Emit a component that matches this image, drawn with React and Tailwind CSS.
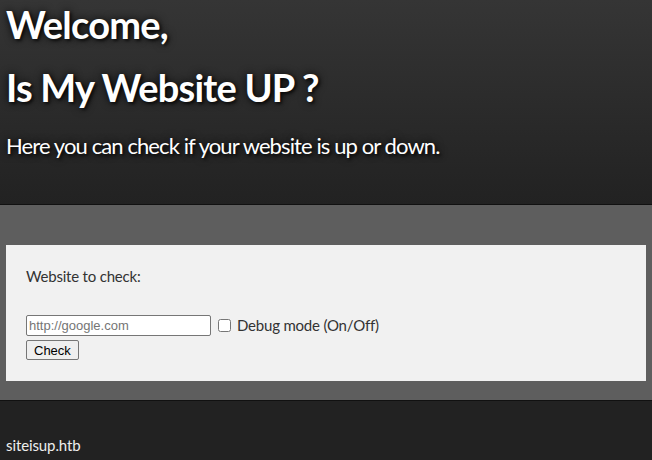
export default function App() {
  return (
    <div className="w-[652px] h-[460px] overflow-hidden bg-[#222222] font-['Lato',sans-serif]">
      <header className="h-[205px] border-b border-[#111111] bg-gradient-to-b from-[#353535] to-[#222222] px-[6px] text-white [text-shadow:0_0_8px_rgba(0,0,0,0.9),2px_2px_3px_rgba(0,0,0,0.6)]">
        <h1 className="text-[38px] font-bold leading-[48px] tracking-[-0.8px]">Welcome,</h1>
        <h1 className="text-[38px] font-bold leading-[48px] mt-[15px] tracking-[-0.8px]">Is My Website UP ?</h1>
        <p className="text-[22px] leading-[28px] mt-[21px] tracking-[-0.9px]">Here you can check if your website is up or down.</p>
      </header>
      <section className="h-[196px] bg-[#5e5e5e] px-[6px] pt-[40px] border-b border-[#111111]">
        <div className="h-[136px] bg-[#f1f1f1] px-[20px] pt-[22px] text-[#333333]">
          <p className="text-[15px] leading-[18px] tracking-[-0.2px]">Website to check:</p>
          <div className="mt-[30px] flex items-center h-[21px]">
            <input
              type="text"
              placeholder="http://google.com"
              className="w-[185px] h-[21px] bg-white border border-[#767676] rounded-[2px] px-[2px] text-[13px] font-['Liberation_Sans',sans-serif] placeholder:text-[#757575] outline-none"
            />
            <input type="checkbox" className="ml-[7px] w-[13px] h-[13px]" />
            <label className="ml-[6px] text-[15px] leading-[21px] tracking-[-0.2px] text-[#333333]">Debug mode (On/Off)</label>
          </div>
          <button className="block mt-[4px] h-[20px] px-[7px] bg-[#efefef] border border-[#767676] rounded-[2px] text-[13px] font-['Liberation_Sans',sans-serif] text-black leading-none">
            Check
          </button>
        </div>
      </section>
      <footer className="px-[6px] pt-[33px] text-[15px] tracking-[-0.1px] text-[#eeeeee]">siteisup.htb</footer>
    </div>
  );
}
